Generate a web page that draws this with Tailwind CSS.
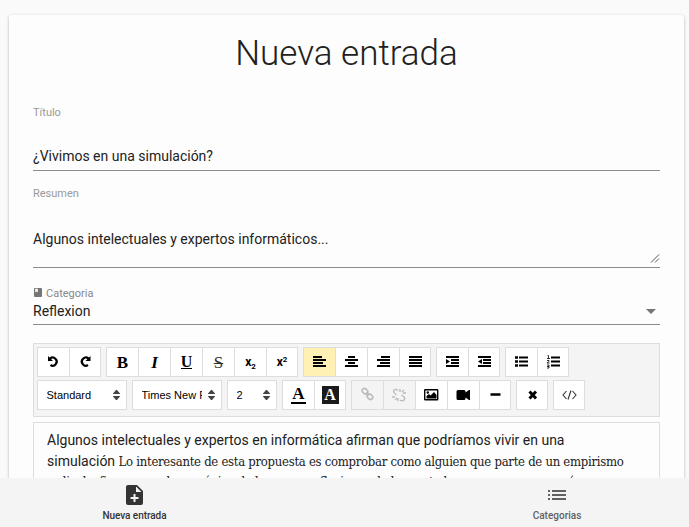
<!DOCTYPE html>
<html lang="es"><head><meta charset="utf-8"><title>Nueva entrada</title>
<script src="https://cdn.jsdelivr.net/npm/@tailwindcss/browser@4"></script></head>
<body class="h-[527px] overflow-hidden bg-[#fafafa] font-['Roboto',sans-serif] text-[#212121]">
<main class="mr-[5px] ml-[9px] mt-[15px] h-[512px] overflow-hidden rounded-t-[2px] bg-[#fdfdfd] px-6 pt-[18px] shadow-[0_1px_3px_rgba(0,0,0,0.3)]">
<h1 class="h-[42px] text-center text-[35px] font-light leading-[42px]">Nueva entrada</h1>
<div class="mt-[31px] h-[65px] border-b border-[#8c8c8c]">
<label class="block text-[11px] leading-[14px] text-[#999]">Título</label>
<div class="mt-[26px] text-[14px] leading-[20px]">¿Vivimos en una simulación?</div></div>
<div class="mt-[16px] flex h-[81px] flex-col border-b border-[#8c8c8c]">
<label class="text-[11px] leading-[14px] text-[#999]">Resumen</label>
<div class="mt-[28px] text-[14px] leading-[20px]">Algunos intelectuales y expertos informáticos...</div>
<svg class="mt-[5px] self-end" width="10" height="9" fill="none" stroke="#555"><path d="M1 8.5 9 .5M5 8.5l4-4"/></svg></div>
<div class="mt-[19px] h-[38px] border-b border-[#8c8c8c]">
<div class="flex h-[14px] items-center text-[11px] leading-[14px] text-[#888]"><svg class="mr-[4px] mb-[3px] ml-[1px]" width="8" height="9" viewBox="0 0 8 9"><path fill="#757575" d="M1 0h6a1 1 0 0 1 1 1v7a1 1 0 0 1-1 1H1a1 1 0 0 1-1-1V1a1 1 0 0 1 1-1z"/><path fill="#fdfdfd" d="M1.2 .8h2.6v3.8l-1.3-1-1.3 1z"/></svg>Categoria</div>
<div class="flex items-center justify-between text-[14px] leading-[20px]">Reflexion<svg class="mr-[4px]" width="10" height="5"><path fill="#757575" d="M0 0h10L5 5z"/></svg></div></div>
<section class="mt-[18px] flex h-[74px] flex-col gap-[3px] border border-[#ddd] bg-[#f4f4f4] p-[3px] text-black">
<div id="r1" class="flex h-[30px] gap-[5px]"></div>
<div id="r2" class="flex h-[30px] gap-[5px]"></div>
</section>
<section class="mt-[5px] h-[105px] border border-[#ddd] pt-[7px] pl-[13px] whitespace-nowrap">
<p class="text-[14px] leading-[21px]">Algunos intelectuales y expertos en informática afirman que podríamos vivir en una</p>
<p class="text-[14px] leading-[21px]">simulación <span class="font-['DejaVu_Serif_Condensed','DejaVu_Serif',serif] [font-stretch:condensed] text-[13px] tracking-[-0.28px]">Lo interesante de esta propuesta es comprobar como alguien que parte de un empirismo</span></p>
<p class="font-['DejaVu_Serif_Condensed','DejaVu_Serif',serif] [font-stretch:condensed] text-[13px] leading-[19px] tracking-[-0.28px]">radical y firme creer la mecánica de la mayor reflexiones de la mente humana en un caso así</p>
</section></main>
<nav class="fixed inset-x-0 bottom-0 flex h-[49px] bg-[#f4f4f4] text-[10px] leading-[12px] font-medium">
<div class="flex w-[269px] shrink-0 flex-col items-center pt-[7px] text-[#333]"><svg width="17" height="21" viewBox="0 0 17 21"><path fill="#333" d="M2 0h9l6 6v12q0 2-2 2H2q-2 0-2-2V2Q0 0 2 0z"/><path fill="#f4f4f4" d="M10 1.5V7h5.5zM7.5 9h2v3h3v2h-3v3h-2v-3h-3v-2h3z"/></svg><span class="mt-[4px] tracking-[-0.05px]">Nueva entrada</span></div>
<div class="ml-[152px] flex w-[268px] flex-col items-center pt-[12px] pl-[4px] text-[#616161]"><svg width="18" height="10" fill="#616161"><path d="M0 0h2v2H0zM4 0h14v2H4zM0 4h2v2H0zM4 4h14v2H4zM0 8h2v2H0zM4 8h14v2H4z"/></svg><span class="mt-[10px]">Categorias</span></div>
</nav>
<script>
const svg=(b)=>`<svg class="mr-[1px] shrink-0" width="16" height="16" viewBox="0 0 16 16" fill="none" stroke="currentColor" stroke-width="1.8">${b}</svg>`;
const lines=(...a)=>svg(`<path d="${a.map((p,i)=>`M${p[0]} ${3+i*3}H${p[1]}`).join('')}"/>`);
const arc='<path stroke-width="2.2" d="M5 4.600A4 4 0 1 1 5.500 11"/><path d="M3 2v5h5z" fill="currentColor" stroke="none"/>';
const link='<g stroke-width="1.6"><rect x="3" y="2" width="6" height="4.5" rx="2.2" transform="rotate(45 6 4.200)"/><rect x="8" y="7.500" width="6" height="4.500" rx="2.2" transform="rotate(45 11 9.700)"/><path d="m7 5.500 3 3"/></g>';
const T=(c,s)=>`<span class="font-['Liberation_Serif',serif] text-[17px] leading-none ${c}">${s}</span>`;
const groups1=[
[svg(arc),svg(`<g transform="matrix(-1 0 0 1 16.5 0)">${arc}</g>`)],
[T('font-bold','B'),T('font-bold italic','I'),'<span class="border-b border-black font-[\'Liberation_Serif\',serif] text-[16px] leading-[13px] font-bold">U</span>',T('line-through decoration-1 text-[#333]','S'),
'<span class="font-[\'Open_Sans\',sans-serif] text-[12px] font-bold leading-none">x<span class="relative top-[3px] text-[8px]">2</span></span>',
'<span class="font-[\'Open_Sans\',sans-serif] text-[12px] font-bold leading-none">x<span class="relative -top-[4px] text-[8px]">2</span></span>'],
[lines([2,11],[2,15],[2,12],[2,15]),lines([5,12],[2,15],[5,12],[2,15]),lines([6,15],[2,15],[5,15],[2,15]),lines([2,15],[2,15],[2,15],[2,15])],
[svg('<path d="M2 3h13M7 6h8M7 9h8M2 12h13"/><path d="m2 5 4 2.5L2 10z" fill="currentColor" stroke="none"/>'),svg('<path d="M2 3h13M7 6h8M7 9h8M2 12h13"/><path d="M6 5 2 7.5 6 10z" fill="currentColor" stroke="none"/>')],
[svg('<path d="M6 3.5h9M6 7.5h9M6 11.5h9"/><path d="M2 3.5h3M2 7.5h3M2 11.5h3" stroke-width="2.6"/>'),svg('<path d="M6 3.500h9M6 7.500h9M6 11.500h9"/><path stroke-width=".8" d="M2.500 1.500h1v3m-1.500 0h3M2 6.500h2v1l-2 1.500h2.500M2 11h2v3h-2m0-1.500h2"/>')]];
const groups2=[
[`<span class="font-['Liberation_Serif',serif] text-[17px] font-bold leading-[16px] border-b-2 border-black px-[1px]">A</span>`,`<span class="flex h-[18px] w-[17px] items-center justify-center bg-[#1b1b1b] font-['Liberation_Serif',serif] text-[16px] font-bold text-white">A</span>`],
[svg(link),svg('<g stroke-width="1.400"><path d="M7 3.500 5.500 2.500q-2-.5-3 1.500 0 2 3 4M9 13q2 1.500 4 0 1.500-2-.5-3.500L10.500 8M9 2v3M11 5l2-2M12 6h3M6 11l-2 2M7 11v3M4 10H1"/></g>'),
svg('<rect x="1.700" y="2.700" width="13" height="10" rx=".5" stroke-width="1.400"/><path d="M3.500 11.500V9l2.500-2 1.500 1.500L11 5l2.500 3v3.500z" fill="currentColor" stroke="none"/><circle cx="4.800" cy="5.500" r="1.200" fill="currentColor" stroke="none"/>'),
svg('<path d="M3 3h6q1.500 0 1.500 1.500v1L14 3h1v10h-1l-3.500-2.500v1Q10.500 13 9 13H3q-1.500 0-1.500-1.500v-7Q1.500 3 3 3z" fill="currentColor" stroke="none"/>'),svg('<path d="M3.500 7.500h10" stroke-width="2.500"/>')],
[svg('<path d="m5.500 4.500 6.500 7m0-7-6.500 7" stroke-width="3"/>')],[svg('<path d="M5.500 4 2 8 5.500 12M11.500 4l3.500 4L11.500 12M10 3.500l-3 9" stroke-width="1.100" stroke="#333"/>')]];
const cell=(h,last,bg,c)=>`<button class="flex h-[30px] w-[32px] items-center justify-center border-y border-l border-[#ddd] ${last?'border-r':''} ${bg} ${c}">${h}</button>`;
const group=(g,gi,row)=>'<div class="flex">'+g.map((h,i)=>cell(h,i===g.length-1,row===1&&gi===2&&i===0?'bg-[#fff1b3]':row===2&&gi===1&&i<2?'bg-[#f4f4f4]':'bg-white',row===2&&gi===1&&i<2?'text-[#bbb]':'text-black')).join('')+'</div>';
const sel=(t,w)=>`<div class="flex h-[30px] ${w} items-center justify-between border border-[#ddd] bg-white pr-[6px] pl-[8.5px] font-['Liberation_Sans',sans-serif] text-[11px]"><span class="overflow-hidden whitespace-nowrap">${t}</span><svg class="ml-[6px] shrink-0" width="7" height="10" fill="#444"><path d="M0 3.500 3 0h1l3 3.500V4H0zM0 6h7v.5L4 10H3L0 6.500z"/></svg></div>`;
r1.innerHTML=groups1.map((g,i)=>group(g,i,1)).join('');
r2.innerHTML=sel('Standard','w-[90px]')+sel('Times New Roman','w-[90px]')+sel('2','w-[50px]')+groups2.map((g,i)=>group(g,i,2)).join('');
</script></body></html>
